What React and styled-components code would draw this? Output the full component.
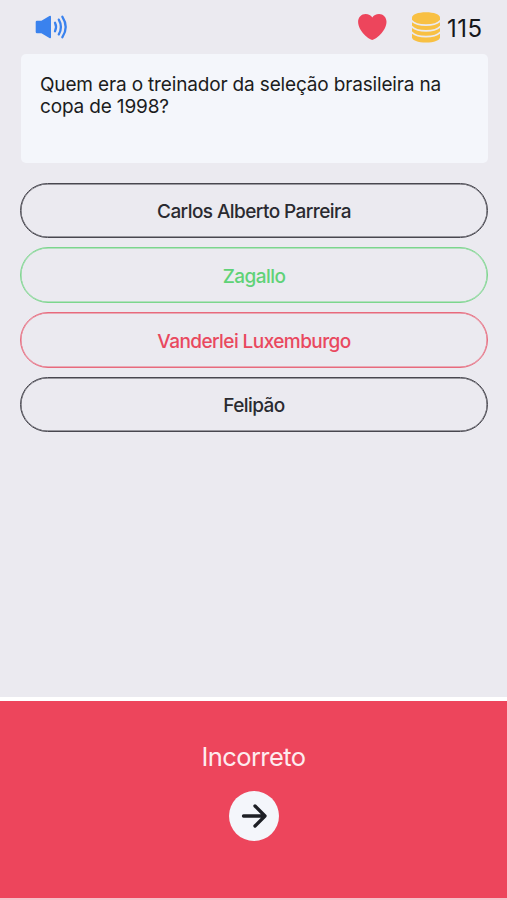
import React from 'react';
import styled, { createGlobalStyle } from 'styled-components';

const GlobalStyle = createGlobalStyle`
    * {
        box-sizing: border-box;
    }

    body {
        margin: 0;
        background: #ebeaf0;
        font-family: Inter, "Liberation Sans", sans-serif;
    }
`

const Screen = styled.div`
    display: flex;
    flex-direction: column;
    width: 100%;
    height: 900px;
    overflow: hidden;
    background: #ebeaf0;
`

const TopBar = styled.header`
    display: flex;
    align-items: center;
    height: 54px;
    padding: 0 24px 0 35px;
`

const SoundButton = styled.button`
    display: flex;
    margin: 0 auto 0 0;
    padding: 0;
    border: 0;
    background: none;
`

const Lives = styled.div`
    display: flex;
    margin-right: 25px;
`

const Coins = styled.div`
    display: flex;
    align-items: center;
    gap: 7px;
`

const CoinCount = styled.span`
    width: 36px;
    padding-top: 3px;
    font-size: 24px;
    line-height: 30px;
    letter-spacing: 0.5px;
    white-space: nowrap;
    color: #16171b;
`

const QuestionCard = styled.div`
    height: 109px;
    margin: 0 19px 0 21px;
    padding: 20px 19px;
    border-radius: 5px;
    background: #f4f6fb;
    color: #1b1c20;
    font-size: 19px;
    line-height: 22px;
    letter-spacing: -0.16px;
`

const Answers = styled.div`
    display: flex;
    flex-direction: column;
    gap: 9px;
    padding: 19.5px 19px 0 20px;
`

const answerColors = {
    neutral: { text: '#2a2a30', border: '#48474f' },
    right: { text: '#5fd277', border: '#7cd68d' },
    wrong: { text: '#e9485e', border: '#e86a7d' },
}

const AnswerButton = styled.button`
    height: 55.7px;
    padding: 3px 0 0;
    border: 1px solid ${props => answerColors[props.$status].border};
    border-radius: 28px;
    box-shadow: inset 0 0 0 0.5px ${props => answerColors[props.$status].border};
    background: transparent;
    color: ${props => answerColors[props.$status].text};
    font-family: inherit;
    font-size: 19px;
    font-weight: 500;
    letter-spacing: -0.57px;
`

const ResultPanel = styled.section`
    display: flex;
    flex-direction: column;
    align-items: center;
    height: 203px;
    margin-top: auto;
    padding-top: 40px;
    border-top: 4px solid #fff;
    border-bottom: 2px solid #f6bfc8;
    background: #ed455c;
`

const ResultText = styled.div`
    font-size: 25.5px;
    line-height: 32px;
    letter-spacing: -0.6px;
    color: #fdecef;
`

const NextButton = styled.button`
    display: flex;
    align-items: center;
    justify-content: center;
    width: 50px;
    height: 50px;
    margin-top: 18px;
    padding: 0;
    border: 0;
    border-radius: 50%;
    background: #f4f6fb;
`

const SpeakerIcon = () => (
    <svg width="33" height="26" viewBox="0 0 33 26">
        <path fill="#3a82ee" d="M2 6.700h4.400L14.400 1.900Q16 1.200 16 2.800v20.400q0 1.600-1.600.9L6.400 19.300H2q-1.300 0-1.300-1.300V8Q.7 6.700 2 6.700Z" />
        <g fill="none" stroke="#3a82ee" strokeWidth="2.300" strokeLinecap="round">
            <path d="M20 8.800q2.100 4.200 0 8.400" />
            <path d="M23.800 5.600q4.200 7.400 0 14.800" />
            <path d="M27.400 2.800q6.600 10.200 0 20.400" />
        </g>
    </svg>
)

const HeartIcon = () => (
    <svg width="30" height="28" viewBox="0 0 30 28">
        <path fill="#ed455c" d="M15.300 27C12.800 27 1.100 18.400 1.100 8.800 1.100 4.200 4.500 1 8.500 1 11.500 1 14.100 2.200 15.300 4.500 16.500 2.200 19.100 1 22.100 1c4 0 7.400 3.200 7.400 7.800C29.500 18.400 17.800 27 15.300 27Z" />
    </svg>
)

const CoinsIcon = () => (
    <svg width="28" height="31" viewBox="0 0 28 31">
        <path fill="#f8c043" d="M0 5.600C0 2.500 6 .3 14 .3s14 2.200 14 5.300v19.600c0 3.100-6 5.300-14 5.300S0 28.300 0 25.200Z" />
        <g fill="none" stroke="#ebeaf0" strokeWidth="1.700">
            <path d="M-.5 8.500C2 11.700 7.500 13.100 14 13.100s12-1.400 14.500-4.600" />
            <path d="M-.5 14.300C2 17.500 7.500 18.900 14 18.900s12-1.400 14.500-4.600" />
            <path d="M-.5 20.100C2 23.300 7.500 24.700 14 24.700s12-1.400 14.500-4.600" />
        </g>
    </svg>
)

const ArrowIcon = () => (
    <svg width="26" height="26" viewBox="0 0 26 26" fill="none" stroke="#1d1f25" strokeWidth="3.300" strokeLinecap="round" strokeLinejoin="round">
        <path d="M2.500 13h21M14 3l10 10-10 10" />
    </svg>
)

const answers = [
    { label: 'Carlos Alberto Parreira', status: 'neutral' },
    { label: 'Zagallo', status: 'right' },
    { label: 'Vanderlei Luxemburgo', status: 'wrong' },
    { label: 'Felipão', status: 'neutral' },
]

const App = () => {
    return (
        <Screen>
            <GlobalStyle />
            <TopBar>
                <SoundButton>
                    <SpeakerIcon />
                </SoundButton>
                <Lives>
                    <HeartIcon />
                </Lives>
                <Coins>
                    <CoinsIcon />
                    <CoinCount>115</CoinCount>
                </Coins>
            </TopBar>
            <QuestionCard>
                Quem era o treinador da seleção brasileira na copa de 1998?
            </QuestionCard>
            <Answers>
                {answers.map(answer => (
                    <AnswerButton key={answer.label} $status={answer.status}>
                        {answer.label}
                    </AnswerButton>
                ))}
            </Answers>
            <ResultPanel>
                <ResultText>Incorreto</ResultText>
                <NextButton>
                    <ArrowIcon />
                </NextButton>
            </ResultPanel>
        </Screen>
    );
}

export default App
